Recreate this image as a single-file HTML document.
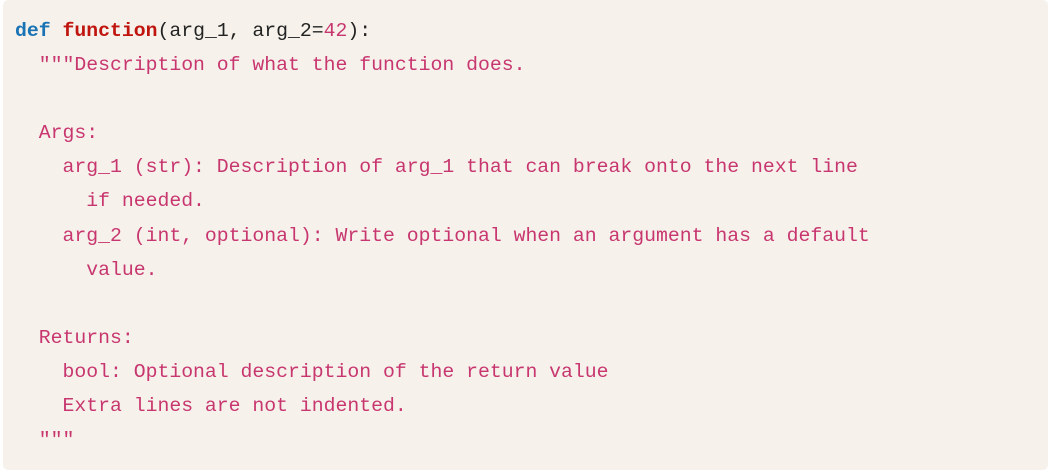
<!DOCTYPE html>
<html><head><style>
html,body{margin:0;padding:0;background:#fff;width:1052px;height:461px;overflow:hidden}
.box{position:absolute;left:3px;top:0;width:1045px;height:470px;background:#f6f2eb;border-radius:5px}
pre{position:absolute;left:15px;top:14px;margin:0;font-family:"Liberation Mono",monospace;font-size:19.8px;line-height:34.1px;color:#222;white-space:pre}
.k{color:#1a73b5;font-weight:bold}
.f{color:#c0150f;font-weight:bold}
.s{color:#c8366f}
</style></head><body>
<div class="box"></div>
<pre><span class="k">def</span> <span class="f">function</span>(arg_1, arg_2=<span class="s">42</span>):
<span class="s">  """Description of what the function does.

  Args:
    arg_1 (str): Description of arg_1 that can break onto the next line
      if needed.
    arg_2 (int, optional): Write optional when an argument has a default
      value.

  Returns:
    bool: Optional description of the return value
    Extra lines are not indented.
  """</span></pre>
</body></html>
